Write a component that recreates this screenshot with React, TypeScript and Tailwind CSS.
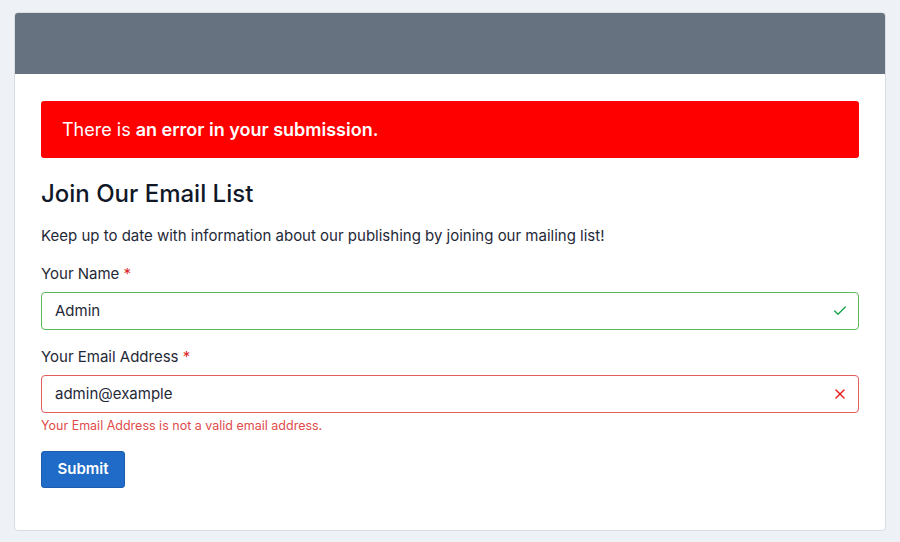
import { Check, X } from "lucide-react";

const App = () => {
  return (
    <div
      className="min-h-[542px] bg-[#eef1f5] px-[14px] pt-[12px] pb-[12px]"
      style={{ fontFamily: "Inter, 'Noto Sans', sans-serif" }}
    >
      <div className="w-[872px] overflow-hidden rounded-[4px] border border-[#d9dde3] bg-white">
        <div className="h-[61px] bg-[#66727f]" />
        <div className="px-[26px] pt-[27px] pb-[42px]">
          <div className="flex h-[57px] items-center rounded-[3px] bg-[#ff0000] px-[21px] text-[18px] text-white">
            There is&nbsp;<span className="font-semibold">an error in your submission.</span>
          </div>

          <h1 className="mt-[20px] text-[24px] leading-[32px] font-medium text-[#111827]">
            Join Our Email List
          </h1>
          <p className="mt-[16px] text-[15px] leading-[20px] text-[#1f2937]">
            Keep up to date with information about our publishing by joining our mailing list!
          </p>

          <label className="mt-[18px] block text-[15px] leading-[20px] text-[#1f2937]">
            Your Name <span className="text-[#dc2626]">*</span>
          </label>
          <div className="mt-[8px] flex h-[38px] items-center justify-between rounded-[4px] border border-[#5cb85c] pr-[10px] pl-[13px]">
            <span className="text-[15px] text-[#1f2937]">Admin</span>
            <Check className="h-[16px] w-[16px] text-[#16a34a]" strokeWidth={2} />
          </div>

          <label className="mt-[17px] block text-[15px] leading-[20px] text-[#1f2937]">
            Your Email Address <span className="text-[#dc2626]">*</span>
          </label>
          <div className="mt-[8px] flex h-[38px] items-center justify-between rounded-[4px] border border-[#e35d5d] pr-[10px] pl-[13px]">
            <span className="text-[15px] text-[#1f2937]">admin@example</span>
            <X className="h-[16px] w-[16px] text-[#e11d1d]" strokeWidth={2} />
          </div>
          <p className="mt-[5px] text-[12.5px] leading-[16px] text-[#e04b4b]">
            Your Email Address is not a valid email address.
          </p>

          <button className="mt-[17px] h-[37px] w-[84px] rounded-[3px] border border-[#1c5db0] bg-[#1f6bc7] text-[15px] font-semibold text-white">
            Submit
          </button>
        </div>
      </div>
    </div>
  );
};

export default App;
